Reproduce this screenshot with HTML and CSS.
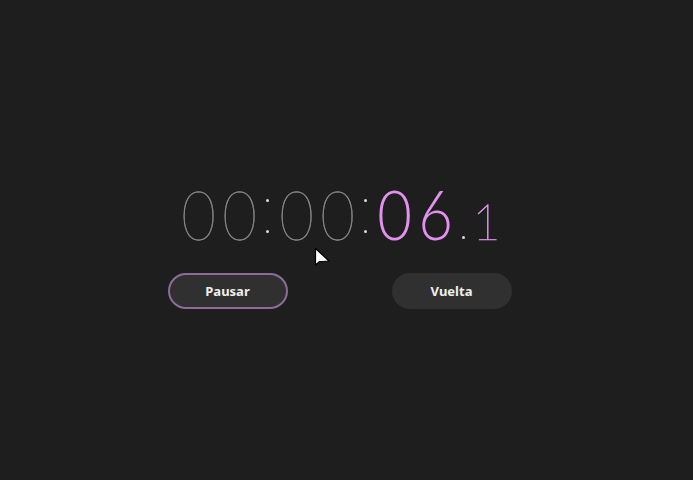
FILE: index.html
```html
<!DOCTYPE html>
<html lang="es">
<head>
<meta charset="utf-8">
<title>Cronómetro</title>
<link rel="stylesheet" href="styles.css">
</head>
<body>
<main class="stopwatch">
  <div class="time">
    <span class="d">0</span><span class="d">0</span><span class="sep"><i></i><i></i></span><span class="d">0</span><span class="d">0</span><span class="sep"><i></i><i></i></span><span class="d hi">0</span><span class="d hi">6</span><span class="dot"><i></i></span><span class="tenth">1</span>
  </div>
  <div class="actions">
    <button class="btn btn-active">Pausar</button>
    <button class="btn">Vuelta</button>
  </div>
</main>
<svg class="cursor" width="18" height="22" viewBox="0 0 18 22"><path d="M1.5 1.5 L1.5 18 L5.5 14.5 L8 14.5 L15 14 Z" fill="#fff" stroke="#000" stroke-width="1.2" stroke-linejoin="round"/></svg>
</body>
</html>
```
FILE: styles.css
```css
html, body {
  margin: 0;
  height: 100%;
  background: #1e1e1e;
}
body {
  position: relative;
  font-family: "Noto Sans", "DejaVu Sans", sans-serif;
  overflow: hidden;
}
.stopwatch {
  display: flex;
  flex-direction: column;
  align-items: center;
  padding-top: 172px;
  padding-right: 14px;
}
.time {
  display: flex;
  align-items: baseline;
  font-family: "Lato", sans-serif;
  font-weight: 100;
  font-size: 68px;
  line-height: 84px;
  color: #8c8c8c;
  -webkit-text-stroke: 0.5px #8c8c8c;
}
.d {
  display: inline-block;
  width: 41px;
  text-align: center;
  transform: scaleX(0.88);
}
.sep {
  align-self: stretch;
  width: 16px;
  display: flex;
  flex-direction: column;
  align-items: center;
  padding-top: 27px;
  gap: 28px;
}
.sep i, .dot i {
  display: block;
  width: 3px;
  height: 3px;
  border-radius: 50%;
  background: #dcdcdc;
}
.hi {
  color: #e291ee;
  font-weight: 300;
  -webkit-text-stroke: 0;
}
.dot {
  align-self: stretch;
  width: 16px;
  display: flex;
  flex-direction: column;
  align-items: center;
  padding-top: 64px;
}
.tenth {
  display: inline-block;
  width: 30px;
  text-align: center;
  font-size: 49px;
  font-weight: 100;
  color: #e291ee;
  -webkit-text-stroke: 0.7px #e291ee;
}
.actions {
  display: flex;
  gap: 104px;
  margin-top: 10px;
}
.btn {
  width: 120px;
  height: 36px;
  border-radius: 18px;
  border: 2px solid transparent;
  background: #303030;
  color: #eeeeee;
  font-family: "Noto Sans", sans-serif;
  font-weight: 700;
  font-size: 13px;
  padding: 0;
}
.btn-active {
  border-color: #8d6c9a;
}
.cursor {
  position: absolute;
  left: 314px;
  top: 247px;
}
```
